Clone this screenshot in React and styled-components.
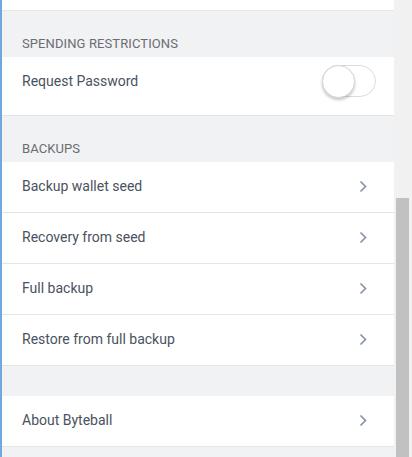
import React, { useState } from 'react';
import styled, { createGlobalStyle } from 'styled-components';

const GlobalStyle = createGlobalStyle`
  html, body {
    margin: 0;
    padding: 0;
    background: #f1f2f4;
    font-family: Roboto, "Liberation Sans", sans-serif;
  }
`;

const Page = styled.div`
  display: flex;
  height: 457px;
  overflow: hidden;
`;

const Content = styled.div`
  flex: 1;
  background: #f1f2f4;
  border-left: 2px solid #70a7dc;
`;

const ScrollTrack = styled.div`
  width: 16px;
  background: #f1f1f1;
  display: flex;
  flex-direction: column;
  padding-left: 2px;
`;

const ScrollThumb = styled.div`
  margin-top: 198px;
  flex: 1;
  width: 13px;
  background: #c1c1c1;
`;

const TopStub = styled.div`
  height: 10px;
  background: #fff;
  border-bottom: 1px solid #e4e5e7;
`;

const SectionHeader = styled.div`
  height: ${(p) => p.$height || 46}px;
  display: flex;
  align-items: flex-end;
  padding: 0 20px 6px;
  box-sizing: border-box;
  font-size: 13px;
  color: #6a6d72;
  text-transform: uppercase;
  letter-spacing: 0.1px;
`;

const Spacer = styled.div`
  height: ${(p) => p.$height}px;
`;

const Row = styled.div`
  height: ${(p) => p.$height || 50}px;
  display: flex;
  align-items: ${(p) => (p.$top ? 'flex-start' : 'center')};
  padding: ${(p) => (p.$top ? '8px 18px 0 20px' : '0 27px 0 20px')};
  box-sizing: content-box;
  background: #fff;
  border-bottom: 1px solid #e4e5e7;
  cursor: pointer;
`;

const Label = styled.span`
  flex: 1;
  font-size: 14px;
  color: #4a5260;
  line-height: ${(p) => (p.$top ? '32px' : '20px')};
  margin-top: ${(p) => (p.$top ? '0' : '-3px')};
`;

const Track = styled.div`
  position: relative;
  width: 52px;
  height: 30px;
  border: 1px solid #dcdcdc;
  border-radius: 16px;
  background: ${(p) => (p.$on ? '#4cd964' : '#fff')};
`;

const Knob = styled.div`
  position: absolute;
  top: -1px;
  left: ${(p) => (p.$on ? '21px' : '-1px')};
  width: 31px;
  height: 31px;
  border-radius: 50%;
  background: #fff;
  border: 1px solid #d6d6d6;
  box-shadow: 0 2px 3px rgba(0, 0, 0, 0.22);
`;

const Chevron = () => (
  <svg width="8" height="13" viewBox="0 0 8 13" style={{ marginTop: -1 }}>
    <path d="M1.5 1.5 L6.5 6.5 L1.5 11.5" fill="none" stroke="#8794a6" strokeWidth="1.7" />
  </svg>
);

const NavRow = ({ children }) => (
  <Row>
    <Label>{children}</Label>
    <Chevron />
  </Row>
);

const App = () => {
  const [locked, setLocked] = useState(false);

  return (
    <Page>
      <GlobalStyle />
      <Content>
        <TopStub />
        <SectionHeader>Spending restrictions</SectionHeader>
        <Row $top $height={50} onClick={() => setLocked(!locked)}>
          <Label $top>Request Password</Label>
          <Track $on={locked}>
            <Knob $on={locked} />
          </Track>
        </Row>
        <SectionHeader>Backups</SectionHeader>
        <NavRow>Backup wallet seed</NavRow>
        <NavRow>Recovery from seed</NavRow>
        <NavRow>Full backup</NavRow>
        <NavRow>Restore from full backup</NavRow>
        <Spacer $height={30} />
        <NavRow>About Byteball</NavRow>
      </Content>
      <ScrollTrack>
        <ScrollThumb />
      </ScrollTrack>
    </Page>
  );
};

export default App;
